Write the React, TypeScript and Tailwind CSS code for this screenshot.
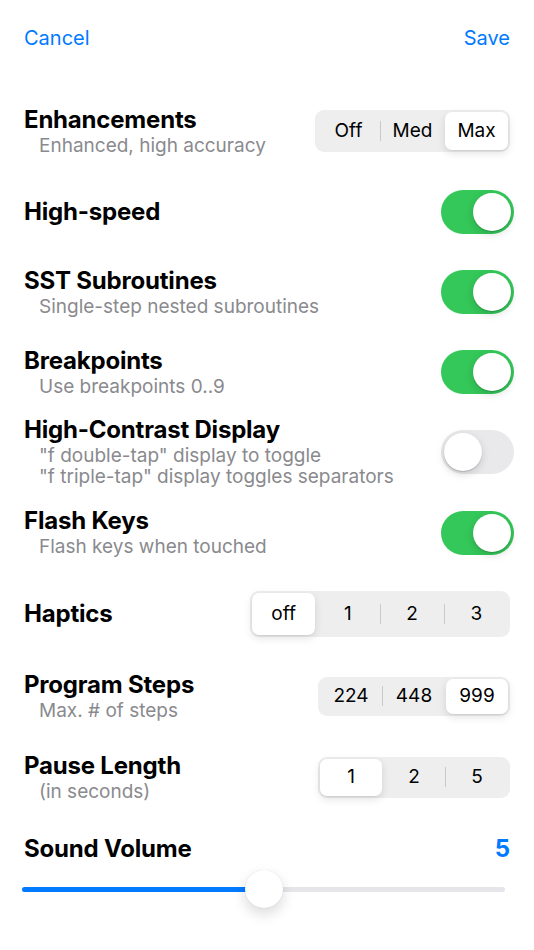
import React from "react";

const font = { fontFamily: "Inter, 'Noto Sans', sans-serif" };

function Toggle({ on }: { on: boolean }) {
  return (
    <div
      className={`-mr-1 flex h-[44px] w-[73px] shrink-0 items-center rounded-full p-[3px] ${
        on ? "justify-end bg-[#34c759]" : "justify-start bg-[#e9e9eb]"
      }`}
    >
      <div className="h-[38px] w-[38px] rounded-full bg-white shadow-[0_3px_8px_rgba(0,0,0,0.15),0_1px_1px_rgba(0,0,0,0.16)]" />
    </div>
  );
}

function Segmented({
  items,
  selected,
  width,
  height,
}: {
  items: string[];
  selected: number;
  width: string;
  height: string;
}) {
  return (
    <div className={`flex shrink-0 items-center rounded-[9px] bg-[#eeeeef] p-[2px] ${width} ${height}`}>
      {items.map((label, i) => (
        <React.Fragment key={label}>
          {i > 0 && (
            <div
              className={`h-[20px] w-px shrink-0 ${
                i === selected || i - 1 === selected ? "bg-transparent" : "bg-[#c9c9cd]"
              }`}
            />
          )}
          <div
            className={`flex h-full flex-1 items-center justify-center text-[19px] text-black ${
              i === selected
                ? "rounded-[7px] bg-white shadow-[0_3px_8px_rgba(0,0,0,0.12),0_1px_1px_rgba(0,0,0,0.04)]"
                : ""
            }`}
          >
            {label}
          </div>
        </React.Fragment>
      ))}
    </div>
  );
}

function Label({ title, subs }: { title: string; subs?: string[] }) {
  return (
    <div className="flex flex-col">
      <div className="text-[24px] font-bold leading-[26px] tracking-[-0.2px] text-black">{title}</div>
      {subs && (
        <div className="mt-[2px] flex flex-col">
          {subs.map((s) => (
            <div key={s} className="pl-[15px] text-[19px] leading-[21px] text-[#8a8a8e]">
              {s}
            </div>
          ))}
        </div>
      )}
    </div>
  );
}

export default function App() {
  return (
    <div className="min-h-[950px] w-[534px] bg-white" style={font}>
      <div className="flex h-[76px] items-center justify-between px-6 text-[20px] text-[#007aff]">
        <span>Cancel</span>
        <span>Save</span>
      </div>

      <div className="pt-[15px]">
        <div className="flex h-[80px] items-center justify-between px-6">
          <Label title="Enhancements" subs={["Enhanced, high accuracy"]} />
          <Segmented items={["Off", "Med", "Max"]} selected={2} width="w-[195px]" height="h-[42px]" />
        </div>
        <div className="flex h-[81px] items-center justify-between px-6">
          <Label title="High-speed" />
          <Toggle on />
        </div>
        <div className="flex h-[80px] items-center justify-between px-6">
          <Label title="SST Subroutines" subs={["Single-step nested subroutines"]} />
          <Toggle on />
        </div>
        <div className="flex h-[80px] items-center justify-between px-6">
          <Label title="Breakpoints" subs={["Use breakpoints 0..9"]} />
          <Toggle on />
        </div>
        <div className="flex h-[80px] items-center justify-between px-6">
          <Label
            title="High-Contrast Display"
            subs={['"f double-tap" display to toggle', '"f triple-tap" display toggles separators']}
          />
          <Toggle on={false} />
        </div>
        <div className="flex h-[81px] items-center justify-between px-6">
          <Label title="Flash Keys" subs={["Flash keys when touched"]} />
          <Toggle on />
        </div>
        <div className="flex h-[82px] items-center justify-between px-6">
          <Label title="Haptics" />
          <Segmented items={["off", "1", "2", "3"]} selected={0} width="w-[260px]" height="h-[46px]" />
        </div>
        <div className="flex h-[82px] items-center justify-between px-6">
          <Label title="Program Steps" subs={["Max. # of steps"]} />
          <Segmented items={["224", "448", "999"]} selected={2} width="w-[192px]" height="h-[39px]" />
        </div>
        <div className="flex h-[80px] items-center justify-between px-6">
          <Label title="Pause Length" subs={["(in seconds)"]} />
          <Segmented items={["1", "2", "5"]} selected={0} width="w-[192px]" height="h-[41px]" />
        </div>

        <div className="mt-[18px] flex h-[28px] items-center justify-between px-6">
          <span className="text-[24px] font-bold tracking-[-0.2px] text-black">Sound Volume</span>
          <span className="text-[24px] font-bold text-[#007aff]">5</span>
        </div>
        <div className="mt-[6px] flex h-[40px] items-center pl-[22px] pr-[29px]">
          <div className="relative h-[5px] w-full rounded-full bg-[#e5e5ea]">
            <div className="h-full w-1/2 rounded-full bg-[#007aff]" />
            <div className="absolute left-1/2 top-1/2 h-[38px] w-[38px] -translate-x-1/2 -translate-y-1/2 rounded-full bg-white shadow-[0_6px_14px_rgba(0,0,0,0.15),0_0_1px_rgba(0,0,0,0.15)]" />
          </div>
        </div>
      </div>
    </div>
  );
}
